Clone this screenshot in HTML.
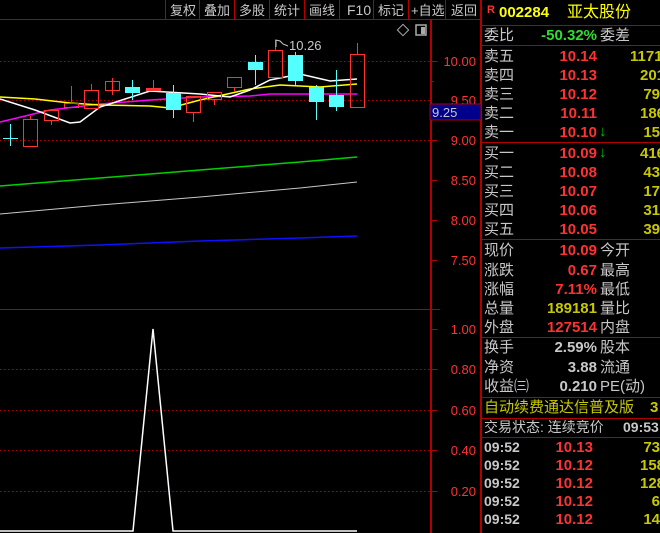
<!DOCTYPE html><html><head><meta charset="utf-8"><style>
body{margin:0;background:#000;width:660px;height:533px;overflow:hidden;font-family:"Liberation Sans","Noto Sans CJK SC",sans-serif;}
svg{position:absolute;left:0;top:0}
.r{position:absolute;height:19px;line-height:19px;font-size:15px;white-space:nowrap}
.l{color:#c8c8c8;left:484px}
.p{right:63px;font-family:"Liberation Sans",sans-serif;font-weight:bold;font-size:15px;text-align:right}
.v{left:600px;color:#c8c8c8}
.q{left:600px;width:60px;overflow:hidden;text-align:right;font-weight:bold;font-family:"Liberation Sans",sans-serif;color:#c8c800}
.red{color:#ff3232}.yel{color:#c8c800}.wh{color:#c8c8c8}
.t{left:484px;color:#c8c8c8;font-weight:bold;font-size:14px}
</style></head><body>
<svg width="660" height="533" font-family="Liberation Sans, Noto Sans CJK SC, sans-serif">
<g stroke="#b00000" stroke-width="1" fill="none">
<line x1="0" y1="19.5" x2="481" y2="19.5"/>
<line x1="165.5" y1="0" x2="165.5" y2="19"/><line x1="199.5" y1="0" x2="199.5" y2="19"/><line x1="234.5" y1="0" x2="234.5" y2="19"/><line x1="269.5" y1="0" x2="269.5" y2="19"/><line x1="304.5" y1="0" x2="304.5" y2="19"/><line x1="339.5" y1="0" x2="339.5" y2="19"/><line x1="373.5" y1="0" x2="373.5" y2="19"/><line x1="408.5" y1="0" x2="408.5" y2="19"/><line x1="445.5" y1="0" x2="445.5" y2="19"/>
<line x1="481" y1="0" x2="481" y2="533" stroke-width="2"/>
<line x1="431" y1="19" x2="431" y2="533" stroke-width="2"/>
<line x1="0" y1="309.5" x2="440" y2="309.5"/>
<g stroke-dasharray="1,3"><line x1="0" y1="61.5" x2="430" y2="61.5"/><line x1="0" y1="100.5" x2="430" y2="100.5"/><line x1="0" y1="140.5" x2="430" y2="140.5"/>
<line x1="0" y1="369.5" x2="430" y2="369.5"/><line x1="0" y1="410.5" x2="430" y2="410.5"/><line x1="0" y1="450.5" x2="430" y2="450.5"/><line x1="0" y1="491.5" x2="430" y2="491.5"/></g>
<g><line x1="432" y1="61.5" x2="437" y2="61.5"/><line x1="432" y1="81.5" x2="434" y2="81.5"/><line x1="432" y1="140.5" x2="437" y2="140.5"/><line x1="432" y1="180.5" x2="437" y2="180.5"/><line x1="432" y1="220.5" x2="437" y2="220.5"/><line x1="432" y1="260.5" x2="437" y2="260.5"/>
<line x1="432" y1="329.5" x2="437" y2="329.5"/><line x1="432" y1="369.5" x2="437" y2="369.5"/><line x1="432" y1="410.5" x2="437" y2="410.5"/><line x1="432" y1="450.5" x2="437" y2="450.5"/><line x1="432" y1="491.5" x2="437" y2="491.5"/></g>
<line x1="482" y1="25.5" x2="660" y2="25.5"/><line x1="482" y1="45.5" x2="660" y2="45.5"/><line x1="482" y1="142.5" x2="660" y2="142.5"/><line x1="482" y1="239.5" x2="660" y2="239.5"/><line x1="482" y1="337.5" x2="660" y2="337.5"/><line x1="482" y1="397.5" x2="660" y2="397.5"/><line x1="482" y1="418.5" x2="660" y2="418.5"/><line x1="482" y1="437.5" x2="660" y2="437.5"/>
</g>
<g fill="#c8c8c8" font-size="13">
<text x="170" y="15">复权</text><text x="204" y="15">叠加</text><text x="239" y="15">多股</text><text x="274" y="15">统计</text><text x="309" y="15">画线</text><text x="347" y="15" font-size="14">F10</text><text x="378" y="15">标记</text><text x="411" y="15">+自选</text><text x="451" y="15">返回</text>
</g>
<rect x="399" y="26" width="8" height="8" fill="none" stroke="#aaa" transform="rotate(45 403 30)"/>
<rect x="416" y="25" width="10" height="10" fill="none" stroke="#aaa" stroke-width="1.5"/><rect x="421" y="27" width="4" height="7" fill="#aaa"/>
<g fill="#ff3232" font-size="13" text-anchor="end">
<text x="476" y="66">10.00</text><text x="476" y="105">9.50</text><text x="476" y="145">9.00</text><text x="476" y="185">8.50</text><text x="476" y="225">8.00</text><text x="476" y="265">7.50</text>
<text x="476" y="334">1.00</text><text x="476" y="374">0.80</text><text x="476" y="415">0.60</text><text x="476" y="455">0.40</text><text x="476" y="496">0.20</text>
</g>
<rect x="430" y="104" width="51" height="16" fill="#00008c" stroke="#b00000"/>
<text x="432" y="117" fill="#c8c8c8" font-size="13">9.25</text>
<polyline fill="none" stroke="#00d000" stroke-width="1.5" points="0,186 100,178 200,170 300,162 357,157"/>
<polyline fill="none" stroke="#c8c8c8" stroke-width="1" points="0,214 100,205 200,197 300,188 357,182"/>
<polyline fill="none" stroke="#1010ff" stroke-width="1.5" points="0,248 100,245 200,241 300,238 357,236"/>
<g stroke-width="1">
<polyline fill="none" stroke="#ff00ff" stroke-width="1.5" points="0,122 50,110 100,104 150,100 200,97 250,96 270,94 357,94"/>
<polyline fill="none" stroke="#ffff00" stroke-width="1.5" points="0,97 35,99 70,103 100,105 150,106 170,108 200,100 250,89 280,85 320,87 357,84"/>
<polyline fill="none" stroke="#fff" stroke-width="1.5" points="0,99 35,110 70,123 80,122 100,107 150,91 200,94 230,97 250,90 270,80 300,74 330,81 357,79"/>
</g>
<g stroke="#ff3232" fill="none">
<line x1="30.5" y1="116" x2="30.5" y2="119"/><rect x="23.5" y="119.5" width="14" height="27"/>
<line x1="51.5" y1="120" x2="51.5" y2="125"/><rect x="44.5" y="110.5" width="14" height="10"/>
<line x1="71.5" y1="86" x2="71.5" y2="103"/><rect x="64.5" y="103.5" width="14" height="4"/>
<line x1="91.5" y1="84" x2="91.5" y2="90"/><rect x="84.5" y="90.5" width="14" height="18"/>
<line x1="112.5" y1="78" x2="112.5" y2="95"/><rect x="105.5" y="81.5" width="14" height="9"/>
<line x1="153.5" y1="80" x2="153.5" y2="90"/><rect x="146.5" y="88.5" width="14" height="2" fill="#ff3232"/>
<line x1="193.5" y1="112" x2="193.5" y2="122"/><rect x="186.5" y="96.5" width="14" height="16"/>
<line x1="214.5" y1="99" x2="214.5" y2="105"/><rect x="207.5" y="92.5" width="14" height="7"/>
<line x1="234.5" y1="87" x2="234.5" y2="92"/><rect x="227.5" y="77.5" width="14" height="10"/>
<line x1="275.5" y1="40" x2="275.5" y2="50"/><rect x="268.5" y="50.5" width="14" height="27"/>
<line x1="357.5" y1="43" x2="357.5" y2="54"/><rect x="350.5" y="54.5" width="14" height="53"/>
</g>
<g stroke="#54ffff" fill="#54ffff">
<line x1="10.5" y1="124" x2="10.5" y2="146"/><line x1="3" y1="138.5" x2="18" y2="138.5"/>
<line x1="132.5" y1="80" x2="132.5" y2="100"/><rect x="125.5" y="87.5" width="14" height="5"/>
<line x1="173.5" y1="85" x2="173.5" y2="118"/><rect x="166.5" y="93.5" width="14" height="16"/>
<line x1="255.5" y1="55" x2="255.5" y2="85"/><rect x="248.5" y="62.5" width="14" height="7"/>
<line x1="295.5" y1="52" x2="295.5" y2="85"/><rect x="288.5" y="55.5" width="14" height="25"/>
<line x1="316.5" y1="85" x2="316.5" y2="120"/><rect x="309.5" y="87.5" width="14" height="14"/>
<line x1="336.5" y1="70" x2="336.5" y2="111"/><rect x="329.5" y="95.5" width="14" height="11"/>
</g>
<polyline fill="none" stroke="#c8c8c8" points="276,47 276,40 280,41 283,44 288,46"/>
<text x="289" y="50" fill="#c8c8c8" font-size="13">10.26</text>
<polyline fill="none" stroke="#fff" stroke-width="1.5" points="0,531 133,531 153,329 173,531 357,531"/>
</svg>
<div class="r" style="left:487px;top:1px;font-size:11px;color:#ff3232;font-weight:bold">R</div>
<div class="r" style="left:499px;top:3px;color:#ffff00;font-size:15px;font-weight:bold">002284</div>
<div class="r" style="left:567px;top:3px;color:#ffff00;font-size:16px">亚太股份</div>
<div class="r l" style="top:26px">委比</div><div class="r p" style="top:26px;color:#32dc32">-50.32%</div><div class="r v" style="top:26px">委差</div>
<div class="r l" style="top:47px">卖五</div><div class="r p red" style="top:47px">10.14</div><div class="r q" style="top:47px;text-align:left;left:630px">1171</div>
<div class="r l" style="top:66px">卖四</div><div class="r p red" style="top:66px">10.13</div><div class="r q" style="top:66px;text-align:left;left:640px">201</div>
<div class="r l" style="top:85px">卖三</div><div class="r p red" style="top:85px">10.12</div><div class="r q" style="top:85px">79</div>
<div class="r l" style="top:104px">卖二</div><div class="r p red" style="top:104px">10.11</div><div class="r q" style="top:104px;text-align:left;left:640px">186</div>
<div class="r l" style="top:123px">卖一</div><div class="r p red" style="top:123px">10.10</div><div class="r" style="left:599px;top:122px;color:#00c000;font-weight:bold">↓</div><div class="r q" style="top:123px">15</div>
<div class="r l" style="top:144px">买一</div><div class="r p red" style="top:144px">10.09</div><div class="r" style="left:599px;top:143px;color:#00c000;font-weight:bold">↓</div><div class="r q" style="top:144px;text-align:left;left:640px">416</div>
<div class="r l" style="top:163px">买二</div><div class="r p red" style="top:163px">10.08</div><div class="r q" style="top:163px">43</div>
<div class="r l" style="top:182px">买三</div><div class="r p red" style="top:182px">10.07</div><div class="r q" style="top:182px">17</div>
<div class="r l" style="top:201px">买四</div><div class="r p red" style="top:201px">10.06</div><div class="r q" style="top:201px">31</div>
<div class="r l" style="top:220px">买五</div><div class="r p red" style="top:220px">10.05</div><div class="r q" style="top:220px">39</div>
<div class="r l" style="top:241px">现价</div><div class="r p red" style="top:241px">10.09</div><div class="r v" style="top:241px">今开</div>
<div class="r l" style="top:261px">涨跌</div><div class="r p red" style="top:261px">0.67</div><div class="r v" style="top:261px">最高</div>
<div class="r l" style="top:280px">涨幅</div><div class="r p red" style="top:280px">7.11%</div><div class="r v" style="top:280px">最低</div>
<div class="r l" style="top:299px">总量</div><div class="r p yel" style="top:299px">189181</div><div class="r v" style="top:299px">量比</div>
<div class="r l" style="top:318px">外盘</div><div class="r p red" style="top:318px">127514</div><div class="r v" style="top:318px">内盘</div>
<div class="r l" style="top:338px">换手</div><div class="r p wh" style="top:338px">2.59%</div><div class="r v" style="top:338px">股本</div>
<div class="r l" style="top:358px">净资</div><div class="r p wh" style="top:358px">3.88</div><div class="r v" style="top:358px">流通</div>
<div class="r l" style="top:377px">收益㈢</div><div class="r p wh" style="top:377px">0.210</div><div class="r v" style="top:377px">PE(动)</div>
<div class="r" style="left:484px;top:398px;color:#c8c800">自动续费通达信普及版</div><div class="r" style="left:650px;top:398px;color:#c8c800;font-weight:bold">3</div>
<div class="r" style="left:484px;top:418px;color:#c8c8c8;font-size:14px">交易状态: 连续竞价</div><div class="r" style="left:623px;top:418px;color:#c8c8c8;font-weight:bold;font-size:14px">09:53</div>
<div class="r t" style="top:438px">09:52</div><div class="r p red" style="top:438px;right:67px">10.13</div><div class="r q" style="top:438px">73</div>
<div class="r t" style="top:456px">09:52</div><div class="r p red" style="top:456px;right:67px">10.12</div><div class="r q" style="top:456px;text-align:left;left:640px">158</div>
<div class="r t" style="top:474px">09:52</div><div class="r p red" style="top:474px;right:67px">10.12</div><div class="r q" style="top:474px;text-align:left;left:640px">128</div>
<div class="r t" style="top:492px">09:52</div><div class="r p red" style="top:492px;right:67px">10.12</div><div class="r q" style="top:492px">6</div>
<div class="r t" style="top:510px">09:52</div><div class="r p red" style="top:510px;right:67px">10.12</div><div class="r q" style="top:510px">14</div>
</body></html>
